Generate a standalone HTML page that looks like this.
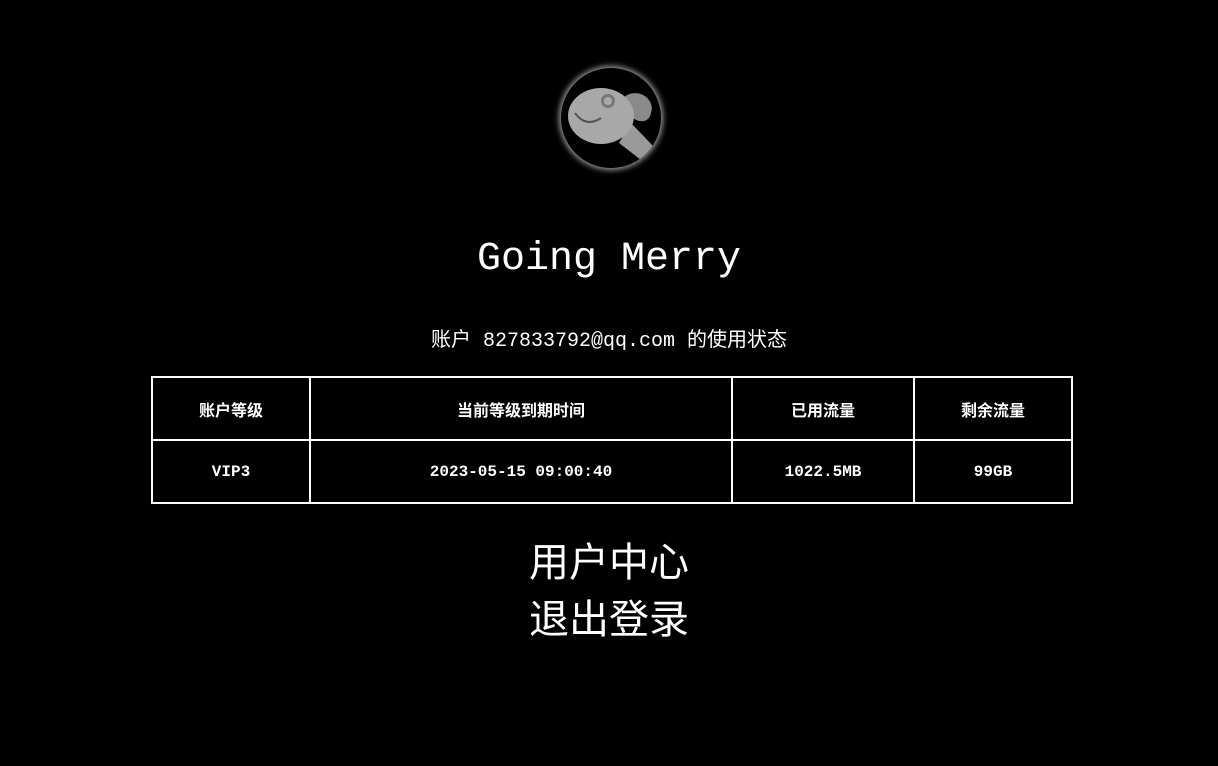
<!DOCTYPE html>
<html><head><meta charset="utf-8"><style>
body{margin:0;background:#000;color:#fff;width:1218px;height:766px;overflow:hidden;font-family:"Liberation Mono","Noto Sans CJK SC",monospace;}
.av{position:absolute;left:561px;top:68px;width:100px;height:100px;border-radius:50%;background:#000;box-shadow:0 0 6px 2px #999;overflow:hidden}
h1{position:absolute;top:232px;left:0;width:1218px;text-align:center;margin:0;font-weight:normal;font-size:40px;line-height:56px}
.sub{position:absolute;top:328px;left:0;width:1218px;text-align:center;font-size:20px;line-height:28px}
table{position:absolute;left:151px;top:376px;width:922px;border-collapse:collapse;font-weight:bold;font-size:16px}
td{border:2px solid #fff;height:61px;text-align:center;padding:0}
.l{position:absolute;left:0;width:1218px;text-align:center;font-size:40px;line-height:54px;font-family:"Noto Sans CJK SC",sans-serif}
</style></head><body>
<div class="av"><svg width="100" height="100" viewBox="0 0 100 100">
<path d="M62 30 C75 18 95 30 90 45 C88 55 78 55 72 50 Z" fill="#8a8a8a"/>
<path d="M70 55 L92 78 L80 92 L58 75 Z" fill="#9a9a9a"/>
<ellipse cx="40" cy="48" rx="33" ry="28" fill="#a8a8a8"/>
<circle cx="47" cy="33" r="7" fill="#777"/><circle cx="47" cy="33" r="4" fill="#aaa"/>
<path d="M14 45 Q25 60 40 50" stroke="#555" stroke-width="2" fill="none"/>
</svg></div>
<h1>Going Merry</h1>
<div class="sub">账户 827833792@qq.com 的使用状态</div>
<table><tr><td style="width:156px">账户等级</td><td style="width:420px">当前等级到期时间</td><td style="width:180px">已用流量</td><td>剩余流量</td></tr>
<tr><td>VIP3</td><td>2023-05-15 09:00:40</td><td>1022.5MB</td><td>99GB</td></tr></table>
<div class="l" style="top:532px">用户中心</div>
<div class="l" style="top:589px">退出登录</div>
</body></html>
